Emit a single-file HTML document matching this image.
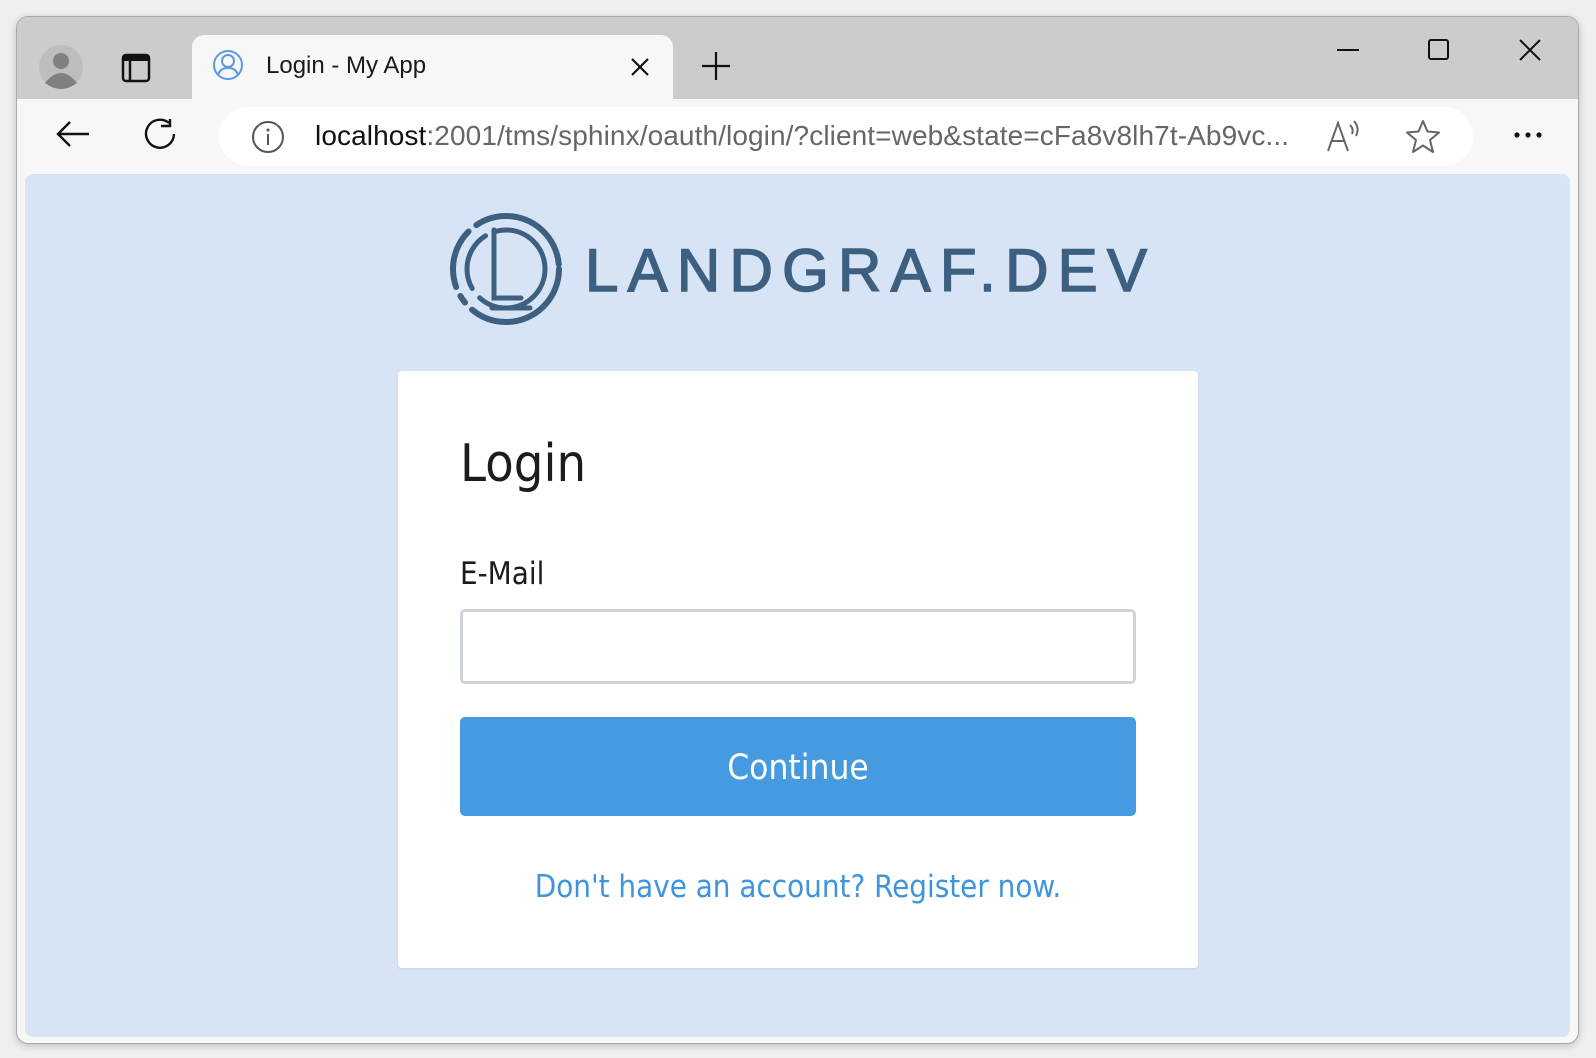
<!DOCTYPE html>
<html><head><meta charset="utf-8"><style>
*{margin:0;padding:0;box-sizing:border-box}
body{width:1596px;height:1058px;background:#efefef;position:relative;overflow:hidden;font-family:"Liberation Sans",sans-serif}
.win{position:absolute;left:16px;top:16px;width:1563px;height:1028px;background:#f7f7f7;border:1px solid #a9a9a9;border-radius:12px;overflow:hidden;box-shadow:0 2px 8px rgba(0,0,0,.2)}
.tabbar{position:absolute;left:0;top:0;right:0;height:82px;background:#cccccc}
.tab{position:absolute;left:175px;top:18px;width:481px;height:66px;background:#f7f7f7;border-radius:12px 12px 0 0}
.tab .t{position:absolute;left:74px;top:17px;font-size:24px;color:#1a1a1a}
.url{position:absolute;left:202px;top:90px;width:1254px;height:59px;background:#fff;border-radius:30px}
.url .t{position:absolute;left:96px;top:13px;font-size:28px;letter-spacing:0.1px;color:#666;white-space:nowrap}
.url .t b{font-weight:normal;color:#111}
.content{position:absolute;left:8px;top:157px;width:1545px;height:863px;background:#d6e4f5;border-radius:8px}
.card{position:absolute;left:373px;top:197px;width:800px;height:597px;background:#fff;border-radius:4px;box-shadow:0 1px 3px rgba(0,0,0,.08);font-family:"DejaVu Sans Condensed","DejaVu Sans",sans-serif;font-stretch:condensed}
.card h1{position:absolute;left:62px;top:63px;font-size:52px;font-weight:normal;color:#1c1c1c}
.card .lbl{position:absolute;left:62px;top:185px;font-size:31px;color:#1c1c1c}
.card .inp{position:absolute;left:62px;top:238px;width:676px;height:75px;border:3px solid #cfd3da;border-radius:5px}
.card .btn{position:absolute;left:62px;top:346px;width:676px;height:99px;background:#469be0;border-radius:5px;color:#fff;font-size:35px;text-align:center;line-height:99px;padding-top:2px}
.card .lnk{position:absolute;left:0;width:800px;top:498px;text-align:center;font-size:31px;color:#3f95dc}
</style></head><body>
<div class="win">
 <div class="tabbar">
  <svg style="position:absolute;left:22px;top:28px" width="44" height="44" viewBox="0 0 44 44"><circle cx="22" cy="22" r="22" fill="#bdbdbd"/><circle cx="22" cy="16" r="8" fill="#808080"/><path d="M6 38 Q22 18 38 38 Q22 50 6 38Z" fill="#808080"/></svg>
  <svg style="position:absolute;left:104px;top:36px" width="30" height="30" viewBox="0 0 30 30"><rect x="2" y="2" width="26" height="26" rx="3" fill="none" stroke="#111" stroke-width="2.5"/><rect x="2" y="2" width="26" height="6" fill="#111"/><line x1="9" y1="8" x2="9" y2="28" stroke="#111" stroke-width="2.5"/></svg>
  <div class="tab"><svg style="position:absolute;left:20px;top:14px" width="32" height="32" viewBox="0 0 32 32"><circle cx="16" cy="16" r="14" fill="none" stroke="#5a9be0" stroke-width="2"/><circle cx="16" cy="12" r="6" fill="none" stroke="#5a9be0" stroke-width="2"/><path d="M6 26 Q8 19 16 19 Q24 19 26 26" fill="none" stroke="#5a9be0" stroke-width="2"/></svg><span class="t">Login - My App</span>
  <svg style="position:absolute;left:438px;top:22px" width="20" height="20" viewBox="0 0 20 20"><path d="M2 2L18 18M18 2L2 18" stroke="#111" stroke-width="2.2"/></svg></div>
  <svg style="position:absolute;left:684px;top:34px" width="30" height="30" viewBox="0 0 30 30"><path d="M15 1V29M1 15H29" stroke="#111" stroke-width="2.2"/></svg>
  <svg style="position:absolute;left:1320px;top:31px" width="22" height="4"><rect width="22" height="2" y="1" fill="#111"/></svg>
  <svg style="position:absolute;left:1411px;top:22px" width="22" height="22"><rect x="1" y="1" width="19" height="19" rx="2" fill="none" stroke="#111" stroke-width="2"/></svg>
  <svg style="position:absolute;left:1502px;top:22px" width="22" height="22"><path d="M1 1L21 21M21 1L1 21" stroke="#111" stroke-width="2"/></svg>
 </div>
 <svg style="position:absolute;left:38px;top:102px" width="36" height="30" viewBox="0 0 36 30"><path d="M34 15H3M15 3L3 15L15 27" fill="none" stroke="#111" stroke-width="2.4"/></svg>
 <svg style="position:absolute;left:126px;top:100px" width="34" height="34" viewBox="0 0 34 34"><path d="M26 6A14 14 0 1 0 31 17" fill="none" stroke="#111" stroke-width="2.4"/><path d="M18 5H27V-2" fill="none" stroke="#111" stroke-width="2.4" transform="translate(0,4)"/></svg>
 <div class="url">
  <svg style="position:absolute;left:32px;top:13px" width="34" height="34" viewBox="0 0 34 34"><circle cx="17" cy="17" r="15" fill="none" stroke="#555" stroke-width="2"/><rect x="16" y="14" width="2" height="11" fill="#555"/><circle cx="17" cy="10" r="1.5" fill="#555"/></svg>
  <span class="t"><b>localhost</b>:2001/tms/sphinx/oauth/login/?client=web&amp;state=cFa8v8lh7t-Ab9vc...</span>
  <svg style="position:absolute;left:1107px;top:12px" width="36" height="34" viewBox="0 0 36 34"><path d="M2 32L12 4L22 32M6 22H18" fill="none" stroke="#666" stroke-width="2"/><path d="M24 6Q28 10 26 15M28 2Q34 9 30 17" fill="none" stroke="#666" stroke-width="2"/></svg>
  <svg style="position:absolute;left:1186px;top:12px" width="36" height="36" viewBox="0 0 36 36"><path d="M18 2L22.5 12.5L34 13.5L25 21L28 33L18 26.5L8 33L11 21L2 13.5L13.5 12.5Z" fill="none" stroke="#666" stroke-width="2" stroke-linejoin="round"/></svg>
 </div>
 <svg style="position:absolute;left:1496px;top:114px" width="32" height="8"><circle cx="4" cy="4" r="2.6" fill="#111"/><circle cx="15" cy="4" r="2.6" fill="#111"/><circle cx="26" cy="4" r="2.6" fill="#111"/></svg>
 <div class="content">
  <svg style="position:absolute;left:416px;top:36px" width="740" height="120" viewBox="0 0 740 120">
   <g fill="none" stroke="#3d5f80" stroke-linecap="round">
    <circle cx="65" cy="59" r="53" stroke-width="6" stroke-dasharray="120 10 8 10 60 10 110 10 8 10"/>
    <circle cx="65" cy="59" r="39" stroke-width="5" stroke-dasharray="90 12 60 12 80 12"/>
    <path d="M53 20V88H80" stroke-width="5"/>
    <path d="M51 98H89" stroke-width="5"/>
   </g>
   <text x="144" y="81" font-family="Liberation Sans,sans-serif" font-size="60" fill="#3d5f80" stroke="#3d5f80" stroke-width="1.5" textLength="562" lengthAdjust="spacing">LANDGRAF.DEV</text>
  </svg>
  <div class="card">
   <h1>Login</h1>
   <div class="lbl">E-Mail</div>
   <div class="inp"></div>
   <div class="btn">Continue</div>
   <div class="lnk">Don't have an account? Register now.</div>
  </div>
 </div>
</div>
</body></html>
